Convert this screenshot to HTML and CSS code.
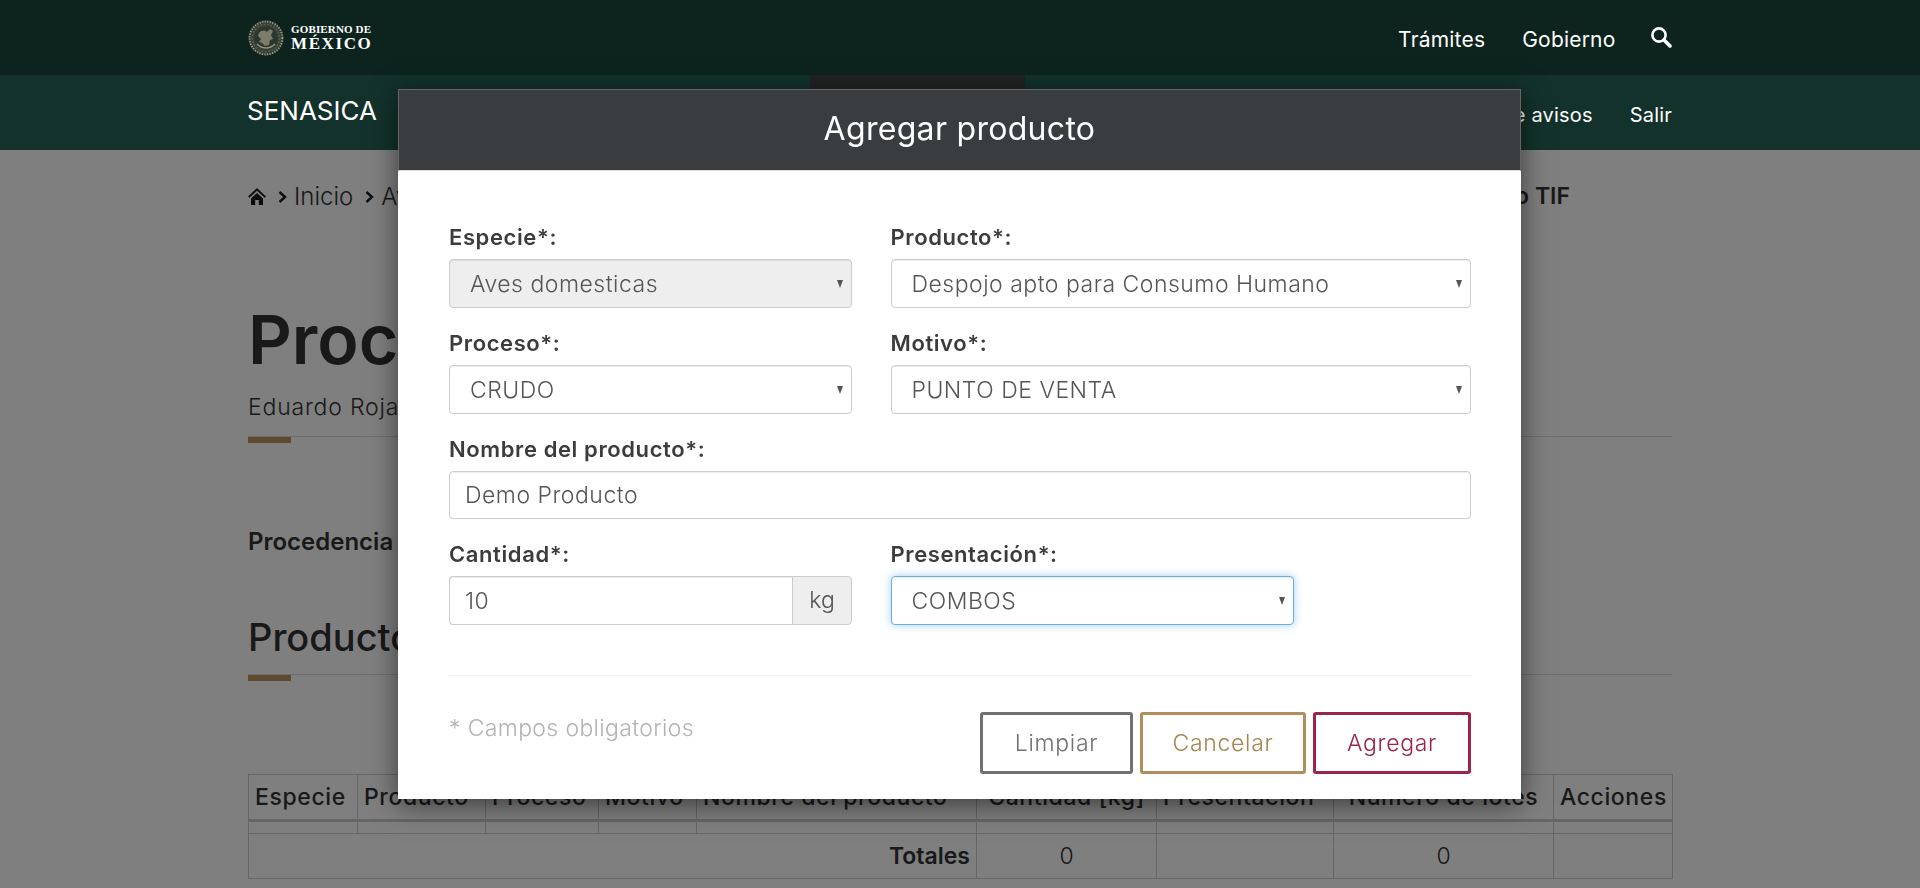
FILE: index.html
```html
<!DOCTYPE html>
<html lang="es">
<head>
    <meta charset="UTF-8">
    <meta name="viewport" content="width=device-width, initial-scale=1.0">
    <title>Agregar producto</title>
    <link rel="stylesheet" href="styles.css">
</head>
<body>
    <header class="site-header">
        <div class="topbar">
            <div class="logo">
                <svg class="seal" viewBox="0 0 36 36" width="36" height="36" aria-hidden="true">
                    <circle cx="18" cy="18" r="17.5" fill="#343d33"/>
                    <circle cx="18" cy="18" r="16.4" fill="none" stroke="#9c9c84" stroke-width="2" stroke-dasharray="1.2 1.4"/>
                    <circle cx="18" cy="18" r="13.6" fill="none" stroke="#74766380" stroke-width="1.8" stroke-dasharray="2.2 1.2"/>
                    <circle cx="18" cy="18" r="11" fill="#2b362e"/>
                    <path d="M11 13c3-3 6-3 8-1l3-3 3 2-2 4 2 4-3 1-1 5-4 1-3-3-3-1 2-3-3-3z" fill="#7c7d68"/>
                    <path d="M9 24c3 3 6 4 9 4s6-1 9-4" fill="none" stroke="#94947c" stroke-width="1.6"/>
                </svg>
                <div class="logo-text">
                    <span class="logo-small">GOBIERNO DE</span>
                    <span class="logo-big">MÉXICO</span>
                </div>
            </div>
            <nav class="topnav">
                <a href="#">Trámites</a>
                <a href="#">Gobierno</a>
                <svg class="search-icon" viewBox="0 0 22 22" width="22" height="22" aria-hidden="true">
                    <circle cx="9" cy="9" r="6.6" fill="none" stroke="#fff" stroke-width="2.6"/>
                    <path d="M14 14l6 6" stroke="#fff" stroke-width="3.6" stroke-linecap="round"/>
                </svg>
            </nav>
        </div>
        <div class="subbar">
            <a class="brand" href="#">SENASICA</a>
            <div class="active-tab"></div>
            <nav class="subnav">
                <a href="#">Centro de avisos</a>
                <a href="#">Salir</a>
            </nav>
        </div>
    </header>

    <main class="page">
        <div class="breadcrumb">
            <svg class="home-icon" viewBox="0 0 18 17" width="18" height="17" aria-hidden="true">
                <path d="M9 0L0 8.4l1.3 1.4L9 2.8l7.7 7 1.3-1.4z"/>
                <path d="M3 10.4l6-5.5 6 5.5V17h-4.2v-5H7.2v5H3z"/>
            </svg>
            <svg class="crumb-sep" viewBox="0 0 9 12" width="9" height="12" aria-hidden="true"><path d="M1.5 1l5.5 5-5.5 5" fill="none" stroke="#1a1a1a" stroke-width="2.4"/></svg>
            <span>Inicio</span>
            <svg class="crumb-sep" viewBox="0 0 9 12" width="9" height="12" aria-hidden="true"><path d="M1.5 1l5.5 5-5.5 5" fill="none" stroke="#1a1a1a" stroke-width="2.4"/></svg>
            <span>Avisos</span>
            <strong class="crumb-last">Establecimiento TIF</strong>
        </div>

        <h1>Procesados</h1>
        <p class="subtitle">Eduardo Rojas</p>
        <div class="rule"></div>

        <p class="origin">Procedencia</p>

        <h2>Productos</h2>
        <div class="rule"></div>

        <table class="products">
            <thead>
                <tr>
                    <th>Especie</th>
                    <th>Producto</th>
                    <th>Proceso</th>
                    <th>Motivo</th>
                    <th>Nombre del producto</th>
                    <th class="center">Cantidad [kg]</th>
                    <th>Presentación</th>
                    <th class="center">Número de lotes</th>
                    <th>Acciones</th>
                </tr>
            </thead>
            <tbody>
                <tr class="empty-row">
                    <td></td><td></td><td></td><td></td><td></td><td></td><td></td><td></td><td></td>
                </tr>
                <tr class="total-row">
                    <td class="total-label" colspan="5">Totales</td>
                    <td class="num">0</td>
                    <td></td>
                    <td class="num">0</td>
                    <td></td>
                </tr>
            </tbody>
        </table>
    </main>

    <div class="backdrop"></div>

    <div class="modal">
        <div class="modal-header">Agregar producto</div>
        <form class="modal-body">
            <div class="form-grid">
                <div class="field">
                    <label for="especie">Especie*:</label>
                    <div class="select-wrap">
                        <select id="especie" disabled><option>Aves domesticas</option></select>
                    </div>
                </div>
                <div class="field field-wide">
                    <label for="producto">Producto*:</label>
                    <div class="select-wrap">
                        <select id="producto"><option>Despojo apto para Consumo Humano</option></select>
                    </div>
                </div>
                <div class="field">
                    <label for="proceso">Proceso*:</label>
                    <div class="select-wrap">
                        <select id="proceso"><option>CRUDO</option></select>
                    </div>
                </div>
                <div class="field field-wide">
                    <label for="motivo">Motivo*:</label>
                    <div class="select-wrap">
                        <select id="motivo"><option>PUNTO DE VENTA</option></select>
                    </div>
                </div>
                <div class="field field-full">
                    <label for="nombre">Nombre del producto*:</label>
                    <input type="text" id="nombre" class="name-input" value="Demo Producto">
                </div>
                <div class="field">
                    <label for="cantidad">Cantidad*:</label>
                    <div class="input-group">
                        <input type="text" id="cantidad" value="10">
                        <span class="addon">kg</span>
                    </div>
                </div>
                <div class="field">
                    <label for="presentacion">Presentación*:</label>
                    <div class="select-wrap">
                        <select id="presentacion" class="focused"><option>COMBOS</option></select>
                    </div>
                </div>
            </div>

            <hr class="divider">

            <div class="form-footer">
                <span class="required-note">* Campos obligatorios</span>
                <div class="buttons">
                    <button type="button" class="btn btn-clear">Limpiar</button>
                    <button type="button" class="btn btn-cancel">Cancelar</button>
                    <button type="submit" class="btn btn-add">Agregar</button>
                </div>
            </div>
        </form>
    </div>
</body>
</html>
```

FILE: styles.css
```css
* {
    box-sizing: border-box;
}
html, body {
    height: 888px;
    overflow: hidden;
}
body {
    margin: 0;
    font-family: Inter, "Liberation Sans", sans-serif;
    color: #333;
    background-color: #fff;
}
a {
    color: #fff;
    text-decoration: none;
}

/* header stays above the backdrop */
.site-header {
    position: relative;
    z-index: 10;
}
.topbar {
    height: 75px;
    padding: 0 248px;
    background-color: #0d241e;
    display: flex;
    align-items: center;
    justify-content: space-between;
}
.logo {
    display: flex;
    align-items: center;
    gap: 7px;
}
.logo-text {
    display: flex;
    flex-direction: column;
    color: #fff;
    font-family: "Liberation Serif", serif;
    font-weight: bold;
}
.logo-small {
    font-size: 11px;
    line-height: 13px;
    letter-spacing: 0.15px;
}
.logo-big {
    font-size: 17px;
    line-height: 16px;
    letter-spacing: 1.6px;
}
.topnav {
    display: flex;
    align-items: center;
    gap: 37px;
    font-size: 21px;
    letter-spacing: 0.2px;
    padding-top: 4px;
}
.search-icon {
    margin-top: -6px;
    margin-left: -2.5px;
}
.subbar {
    height: 75px;
    padding: 0 248px;
    background-color: #13322b;
    display: flex;
}
.brand {
    width: 562px;
    margin-left: -1px;
    font-size: 26px;
    line-height: 71px;
}
.active-tab {
    width: 215px;
    margin-left: 1px;
    background-color: #212223;
}
.subnav {
    margin-left: auto;
    display: flex;
    align-items: center;
    gap: 37px;
    font-size: 20px;
    letter-spacing: 0.2px;
    padding-top: 5px;
}

/* page behind the modal */
.page {
    padding: 0 248px;
}
.breadcrumb {
    display: flex;
    align-items: center;
    height: 30px;
    margin-top: 31px;
    padding-right: 102px;
    font-size: 24px;
    font-weight: 300;
}
.home-icon {
    fill: #1a1a1a;
    margin-right: 12px;
}
.crumb-sep {
    margin: 2px 7px 0 0;
}
.breadcrumb span {
    margin-right: 12px;
}
.crumb-last {
    margin-left: auto;
    font-size: 23px;
    font-weight: 600;
}
h1 {
    margin: 88px 0 0;
    font-size: 68px;
    line-height: 80px;
    font-weight: 600;
}
.subtitle {
    margin: 14px 0 0;
    font-size: 23px;
    line-height: 28px;
    font-weight: 300;
    letter-spacing: 0.8px;
}
.rule {
    height: 7px;
    margin-top: 15px;
    border-top: 1px solid #ddd;
    position: relative;
}
.rule::before {
    content: "";
    display: block;
    width: 43px;
    height: 6px;
    background-color: #bc955c;
}
.origin {
    margin: 84px 0 0;
    font-size: 24px;
    line-height: 30px;
    font-weight: 600;
}
h2 {
    margin: 59px 0 0;
    font-size: 38px;
    line-height: 43px;
    font-weight: 500;
}
.rule + .products {
    margin-top: 93px;
}
.products {
    width: 1424px;
    table-layout: fixed;
    border-collapse: collapse;
    font-size: 23px;
}
.products th, .products td {
    border: 1px solid #ccc;
    padding: 0 6px;
}
.products th {
    height: 46px;
    font-weight: 500;
    text-align: left;
    white-space: nowrap;
    border-bottom-width: 3px;
    letter-spacing: 0.6px;
}
.products th.center {
    text-align: center;
}
.products th:nth-child(1) { width: 109px; }
.products th:nth-child(2) { width: 128px; }
.products th:nth-child(3) { width: 113px; }
.products th:nth-child(4) { width: 98px; }
.products th:nth-child(5) { width: 280px; }
.products th:nth-child(6) { width: 180px; }
.products th:nth-child(7) { width: 177px; }
.products th:nth-child(8) { width: 220px; }
.products th:nth-child(9) { width: 119px; }
.empty-row td {
    height: 13px;
}
.total-row td {
    height: 45px;
}
.total-label {
    text-align: right;
    font-weight: 600;
}
.num {
    text-align: center;
    font-weight: 300;
}

.backdrop {
    position: fixed;
    inset: 0;
    z-index: 5;
    background-color: rgba(0, 0, 0, 0.5);
}

/* modal */
.modal {
    position: absolute;
    z-index: 20;
    top: 89px;
    left: 398px;
    width: 1123px;
    height: 710px;
    background-color: #fff;
    box-shadow: 0 5px 26px rgba(0, 0, 0, 0.55);
}
.modal-header {
    height: 82px;
    border: 1px solid #666;
    border-bottom-color: #ddd;
    background-color: #3a3d40;
    color: #fff;
    font-size: 32px;
    line-height: 78px;
    letter-spacing: 0.3px;
    text-align: center;
    font-weight: 400;
}
.modal-body {
    padding: 55px 50px 25px 51px;
}
.form-grid {
    display: grid;
    grid-template-columns: 403px 403px 139px;
    column-gap: 38.5px;
    row-gap: 24px;
}
.field-wide {
    grid-column: 2 / 4;
}
.field-full {
    grid-column: 1 / 4;
}
label {
    display: block;
    height: 24px;
    margin-bottom: 9px;
    font-size: 22px;
    line-height: 22px;
    font-weight: 600;
    letter-spacing: 0.6px;
    color: #3c3c3c;
}
input, select {
    display: block;
    width: 100%;
    height: 49px;
    border: 1px solid #ccc;
    border-radius: 4px;
    background-color: #fff;
    color: #555;
    font-family: inherit;
    font-size: 23px;
    font-weight: 350;
    letter-spacing: 0.5px;
    outline: none;
    box-shadow: inset 0 1px 1px rgba(0, 0, 0, 0.075);
}
input {
    padding: 0 15px;
}
.name-input {
    height: 48px;
}
select {
    appearance: none;
    padding: 0 30px 0 20px;
}
select:disabled {
    background-color: #eee;
    opacity: 1;
}
select.focused {
    border-color: #66afe9;
    box-shadow: inset 0 1px 1px rgba(0, 0, 0, 0.075), 0 0 8px rgba(102, 175, 233, 0.6);
}
.select-wrap {
    position: relative;
}
.select-wrap::after {
    content: "";
    position: absolute;
    top: 21px;
    right: 9px;
    border-left: 3.5px solid transparent;
    border-right: 3.5px solid transparent;
    border-top: 8px solid #555;
}
.input-group {
    display: flex;
}
.input-group input {
    flex: 1;
    min-width: 0;
    border-radius: 4px 0 0 4px;
    border-right: none;
}
.addon {
    width: 60px;
    height: 49px;
    border: 1px solid #ccc;
    border-radius: 0 4px 4px 0;
    background-color: #eee;
    color: #555;
    font-size: 23px;
    font-weight: 350;
    line-height: 47px;
    text-align: center;
}
.divider {
    margin: 50px 0 0;
    border: none;
    border-top: 1px solid #eee;
}
.form-footer {
    display: flex;
    justify-content: space-between;
    margin-top: 36px;
}
.required-note {
    color: #b3b3b3;
    font-size: 23px;
    font-weight: 350;
    line-height: 32px;
    letter-spacing: 0.35px;
}
.buttons {
    display: flex;
    gap: 7px;
}
.btn {
    height: 62px;
    padding: 0;
    background-color: #fff;
    border: 3px solid;
    border-radius: 3px;
    font-family: inherit;
    font-size: 23px;
    font-weight: 350;
    letter-spacing: 0.7px;
}
.btn-clear {
    width: 153px;
    border-color: #6f7271;
    color: #6f7271;
}
.btn-cancel {
    width: 166px;
    border-color: #b38e5d;
    color: #a8844f;
}
.btn-add {
    width: 158px;
    border-color: #9d2449;
    color: #9d2449;
}
```
